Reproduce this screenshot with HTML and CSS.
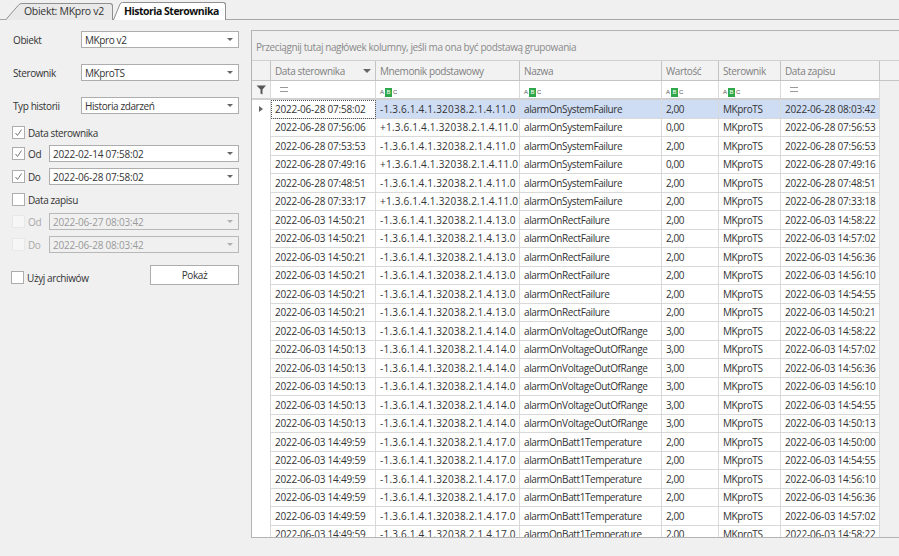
FILE: index.html
```html
<!DOCTYPE html>
<html lang="pl">
<head>
    <meta charset="UTF-8">
    <title>Historia Sterownika</title>
    <link rel="stylesheet" href="styles.css">
</head>
<body>
    <div class="tabs">
        <div class="tab">
            <svg class="tab-edge" width="19" height="17" viewBox="0 0 19 17"><path d="M0.5 17 L14 1.5 Q15 0.5 17 0.5 H19 V17 Z" fill="#e9e9e9"/><path d="M0.5 17 L14 1.5 Q15 0.5 17 0.5 H19" fill="none" stroke="#8f8f8f"/></svg>
            <span class="tab-label">Obiekt: MKpro v2</span>
        </div>
        <div class="tab tab-active">
            <svg class="tab-edge" width="11" height="18" viewBox="0 0 11 18"><path d="M0.5 18 L7 2 Q8 0.5 9.5 0.5 H11 V18 Z" fill="#fff"/><path d="M0.5 18 L7 2 Q8 0.5 9.5 0.5 H11" fill="none" stroke="#8f8f8f"/></svg>
            <span class="tab-label">Historia Sterownika</span>
        </div>
    </div>

    <div class="main">
        <div class="filters">
            <div class="field">
                <label class="field-label">Obiekt</label>
                <div class="combo"><span>MKpro v2</span><i class="arrow"></i></div>
            </div>
            <div class="field">
                <label class="field-label">Sterownik</label>
                <div class="combo"><span>MKproTS</span><i class="arrow"></i></div>
            </div>
            <div class="field field-last">
                <label class="field-label">Typ historii</label>
                <div class="combo"><span>Historia zdarzeń</span><i class="arrow"></i></div>
            </div>

            <div class="check-row check-head">
                <span class="check"><svg width="11" height="11" viewBox="0 0 11 11"><path d="M2.5 6 L4.5 8.5 L8.5 2.5" fill="none" stroke="#777"/></svg></span>
                <span>Data sterownika</span>
            </div>
            <div class="date-row">
                <span class="check"><svg width="11" height="11" viewBox="0 0 11 11"><path d="M2.5 6 L4.5 8.5 L8.5 2.5" fill="none" stroke="#777"/></svg></span>
                <span class="date-label">Od</span>
                <div class="combo"><span>2022-02-14 07:58:02</span><i class="arrow"></i></div>
            </div>
            <div class="date-row">
                <span class="check"><svg width="11" height="11" viewBox="0 0 11 11"><path d="M2.5 6 L4.5 8.5 L8.5 2.5" fill="none" stroke="#777"/></svg></span>
                <span class="date-label">Do</span>
                <div class="combo"><span>2022-06-28 07:58:02</span><i class="arrow"></i></div>
            </div>

            <div class="check-row check-head-2">
                <span class="check"></span>
                <span>Data zapisu</span>
            </div>
            <div class="date-row disabled">
                <span class="check"></span>
                <span class="date-label">Od</span>
                <div class="combo"><span>2022-06-27 08:03:42</span><i class="arrow"></i></div>
            </div>
            <div class="date-row disabled">
                <span class="check"></span>
                <span class="date-label">Do</span>
                <div class="combo"><span>2022-06-28 08:03:42</span><i class="arrow"></i></div>
            </div>

            <div class="actions">
                <div class="check-row archive">
                    <span class="check"></span>
                    <span>Użyj archiwów</span>
                </div>
                <button class="show-btn">Pokaż</button>
            </div>
        </div>

        <div class="grid">
            <div class="group-panel">Przeciągnij tutaj nagłówek kolumny, jeśli ma ona być podstawą grupowania</div>
            <div class="grid-body">
                <table>
                    <colgroup>
                        <col class="c-ind"><col class="c-date"><col class="c-oid"><col class="c-name"><col class="c-val"><col class="c-ster"><col class="c-saved"><col>
                    </colgroup>
                    <thead>
                        <tr class="head">
                            <th></th>
                            <th><div class="sort-cell">Data sterownika<i class="sort-arrow"></i></div></th>
                            <th>Mnemonik podstawowy</th>
                            <th>Nazwa</th>
                            <th>Wartość</th>
                            <th>Sterownik</th>
                            <th>Data zapisu</th>
                            <th class="rest"></th>
                        </tr>
                        <tr class="filter">
                            <td class="ind"><svg width="11" height="10" viewBox="0 0 11 10"><path d="M0.5 0.5 H10 L6.5 4.5 V9.5 L4.5 8.5 V4.5 Z" fill="#555"/></svg></td>
                            <td><span class="eq"></span></td>
                            <td><span class="abc"><b>A</b><u>B</u><b>C</b></span></td>
                            <td><span class="abc"><b>A</b><u>B</u><b>C</b></span></td>
                            <td><span class="abc"><b>A</b><u>B</u><b>C</b></span></td>
                            <td><span class="abc"><b>A</b><u>B</u><b>C</b></span></td>
                            <td><span class="eq"></span></td>
                            <td class="rest"></td>
                        </tr>
                    </thead>
                    <tbody>
                        <tr class="selected"><td class="ind"><i class="row-mark"></i></td><td class="focus">2022-06-28 07:58:02</td><td>-1.3.6.1.4.1.32038.2.1.4.11.0</td><td>alarmOnSystemFailure</td><td>2,00</td><td>MKproTS</td><td>2022-06-28 08:03:42</td><td class="rest"></td></tr>
                        <tr><td class="ind"></td><td>2022-06-28 07:56:06</td><td>+1.3.6.1.4.1.32038.2.1.4.11.0</td><td>alarmOnSystemFailure</td><td>0,00</td><td>MKproTS</td><td>2022-06-28 07:56:53</td><td class="rest"></td></tr>
                        <tr><td class="ind"></td><td>2022-06-28 07:53:53</td><td>-1.3.6.1.4.1.32038.2.1.4.11.0</td><td>alarmOnSystemFailure</td><td>2,00</td><td>MKproTS</td><td>2022-06-28 07:56:53</td><td class="rest"></td></tr>
                        <tr><td class="ind"></td><td>2022-06-28 07:49:16</td><td>+1.3.6.1.4.1.32038.2.1.4.11.0</td><td>alarmOnSystemFailure</td><td>0,00</td><td>MKproTS</td><td>2022-06-28 07:49:16</td><td class="rest"></td></tr>
                        <tr><td class="ind"></td><td>2022-06-28 07:48:51</td><td>-1.3.6.1.4.1.32038.2.1.4.11.0</td><td>alarmOnSystemFailure</td><td>2,00</td><td>MKproTS</td><td>2022-06-28 07:48:51</td><td class="rest"></td></tr>
                        <tr><td class="ind"></td><td>2022-06-28 07:33:17</td><td>+1.3.6.1.4.1.32038.2.1.4.11.0</td><td>alarmOnSystemFailure</td><td>2,00</td><td>MKproTS</td><td>2022-06-28 07:33:18</td><td class="rest"></td></tr>
                        <tr><td class="ind"></td><td>2022-06-03 14:50:21</td><td>-1.3.6.1.4.1.32038.2.1.4.13.0</td><td>alarmOnRectFailure</td><td>2,00</td><td>MKproTS</td><td>2022-06-03 14:58:22</td><td class="rest"></td></tr>
                        <tr><td class="ind"></td><td>2022-06-03 14:50:21</td><td>-1.3.6.1.4.1.32038.2.1.4.13.0</td><td>alarmOnRectFailure</td><td>2,00</td><td>MKproTS</td><td>2022-06-03 14:57:02</td><td class="rest"></td></tr>
                        <tr><td class="ind"></td><td>2022-06-03 14:50:21</td><td>-1.3.6.1.4.1.32038.2.1.4.13.0</td><td>alarmOnRectFailure</td><td>2,00</td><td>MKproTS</td><td>2022-06-03 14:56:36</td><td class="rest"></td></tr>
                        <tr><td class="ind"></td><td>2022-06-03 14:50:21</td><td>-1.3.6.1.4.1.32038.2.1.4.13.0</td><td>alarmOnRectFailure</td><td>2,00</td><td>MKproTS</td><td>2022-06-03 14:56:10</td><td class="rest"></td></tr>
                        <tr><td class="ind"></td><td>2022-06-03 14:50:21</td><td>-1.3.6.1.4.1.32038.2.1.4.13.0</td><td>alarmOnRectFailure</td><td>2,00</td><td>MKproTS</td><td>2022-06-03 14:54:55</td><td class="rest"></td></tr>
                        <tr><td class="ind"></td><td>2022-06-03 14:50:21</td><td>-1.3.6.1.4.1.32038.2.1.4.13.0</td><td>alarmOnRectFailure</td><td>2,00</td><td>MKproTS</td><td>2022-06-03 14:50:21</td><td class="rest"></td></tr>
                        <tr><td class="ind"></td><td>2022-06-03 14:50:13</td><td>-1.3.6.1.4.1.32038.2.1.4.14.0</td><td>alarmOnVoltageOutOfRange</td><td>3,00</td><td>MKproTS</td><td>2022-06-03 14:58:22</td><td class="rest"></td></tr>
                        <tr><td class="ind"></td><td>2022-06-03 14:50:13</td><td>-1.3.6.1.4.1.32038.2.1.4.14.0</td><td>alarmOnVoltageOutOfRange</td><td>3,00</td><td>MKproTS</td><td>2022-06-03 14:57:02</td><td class="rest"></td></tr>
                        <tr><td class="ind"></td><td>2022-06-03 14:50:13</td><td>-1.3.6.1.4.1.32038.2.1.4.14.0</td><td>alarmOnVoltageOutOfRange</td><td>3,00</td><td>MKproTS</td><td>2022-06-03 14:56:36</td><td class="rest"></td></tr>
                        <tr><td class="ind"></td><td>2022-06-03 14:50:13</td><td>-1.3.6.1.4.1.32038.2.1.4.14.0</td><td>alarmOnVoltageOutOfRange</td><td>3,00</td><td>MKproTS</td><td>2022-06-03 14:56:10</td><td class="rest"></td></tr>
                        <tr><td class="ind"></td><td>2022-06-03 14:50:13</td><td>-1.3.6.1.4.1.32038.2.1.4.14.0</td><td>alarmOnVoltageOutOfRange</td><td>3,00</td><td>MKproTS</td><td>2022-06-03 14:54:55</td><td class="rest"></td></tr>
                        <tr><td class="ind"></td><td>2022-06-03 14:50:13</td><td>-1.3.6.1.4.1.32038.2.1.4.14.0</td><td>alarmOnVoltageOutOfRange</td><td>3,00</td><td>MKproTS</td><td>2022-06-03 14:50:13</td><td class="rest"></td></tr>
                        <tr><td class="ind"></td><td>2022-06-03 14:49:59</td><td>-1.3.6.1.4.1.32038.2.1.4.17.0</td><td>alarmOnBatt1Temperature</td><td>2,00</td><td>MKproTS</td><td>2022-06-03 14:50:00</td><td class="rest"></td></tr>
                        <tr><td class="ind"></td><td>2022-06-03 14:49:59</td><td>-1.3.6.1.4.1.32038.2.1.4.17.0</td><td>alarmOnBatt1Temperature</td><td>2,00</td><td>MKproTS</td><td>2022-06-03 14:54:55</td><td class="rest"></td></tr>
                        <tr><td class="ind"></td><td>2022-06-03 14:49:59</td><td>-1.3.6.1.4.1.32038.2.1.4.17.0</td><td>alarmOnBatt1Temperature</td><td>2,00</td><td>MKproTS</td><td>2022-06-03 14:56:10</td><td class="rest"></td></tr>
                        <tr><td class="ind"></td><td>2022-06-03 14:49:59</td><td>-1.3.6.1.4.1.32038.2.1.4.17.0</td><td>alarmOnBatt1Temperature</td><td>2,00</td><td>MKproTS</td><td>2022-06-03 14:56:36</td><td class="rest"></td></tr>
                        <tr><td class="ind"></td><td>2022-06-03 14:49:59</td><td>-1.3.6.1.4.1.32038.2.1.4.17.0</td><td>alarmOnBatt1Temperature</td><td>2,00</td><td>MKproTS</td><td>2022-06-03 14:57:02</td><td class="rest"></td></tr>
                        <tr><td class="ind"></td><td>2022-06-03 14:49:59</td><td>-1.3.6.1.4.1.32038.2.1.4.17.0</td><td>alarmOnBatt1Temperature</td><td>2,00</td><td>MKproTS</td><td>2022-06-03 14:58:22</td><td class="rest"></td></tr>
                    </tbody>
                </table>
            </div>
        </div>
    </div>
</body>
</html>
```

FILE: styles.css
```css
/* Global Styles */
html, body {
    margin: 0;
    padding: 0;
}

body {
    width: 899px;
    height: 556px;
    overflow: hidden;
    background: #f0f0f0;
    color: #333;
    font-family: "Open Sans", "Noto Sans", sans-serif;
    font-size: 10px;
    letter-spacing: -0.4px;
}

/* Tabs */
.tabs {
    display: flex;
    align-items: flex-end;
    height: 19px;
    padding-left: 5px;
    border-bottom: 1px solid #a6a6a6;
}

.tab {
    display: flex;
    height: 17px;
    margin-bottom: -1px;
}

.tab-edge {
    display: block;
    flex: none;
}

.tab-label {
    width: 89px;
    box-sizing: border-box;
    background: #e9e9e9;
    border: 1px solid #8f8f8f;
    border-left: none;
    border-bottom: none;
    border-radius: 0 3px 0 0;
    font-size: 10.5px;
    letter-spacing: -0.3px;
    line-height: 15px;
    white-space: nowrap;
}

.tab-active {
    height: 18px;
    position: relative;
}

.tab-active .tab-label {
    width: 102px;
    background: #fff;
    color: #111;
    font-weight: bold;
    letter-spacing: -0.5px;
    line-height: 16px;
}

/* Left panel */
.main {
    display: flex;
    height: 536px;
}

.filters {
    flex: none;
    width: 251px;
    box-sizing: border-box;
    padding: 11px 12px 0;
}

.field {
    display: flex;
    align-items: center;
    justify-content: space-between;
    margin-bottom: 16px;
}

.field-last {
    margin-bottom: 12px;
}

.field-label {
    padding-left: 1px;
}

.combo {
    display: flex;
    align-items: center;
    justify-content: space-between;
    width: 158px;
    height: 17px;
    box-sizing: border-box;
    padding: 0 5px 0 3px;
    background: #fff;
    border: 1px solid #adadad;
    color: #333;
}

.arrow {
    width: 0;
    height: 0;
    border-left: 3px solid transparent;
    border-right: 3px solid transparent;
    border-top: 3px solid #666;
}

.check {
    display: inline-block;
    flex: none;
    width: 13px;
    height: 13px;
    box-sizing: border-box;
    background: #fff;
    border: 1px solid #adadad;
}

.check svg {
    display: block;
}

.check-row {
    display: flex;
    align-items: center;
    gap: 3px;
    height: 13px;
}

.check-head {
    margin-bottom: 6px;
}

.check-head-2 {
    margin: 8px 0 7px;
}

.date-row {
    display: flex;
    align-items: center;
    margin-bottom: 6px;
}

.date-row .combo {
    width: 190px;
    letter-spacing: -0.2px;
}

.date-label {
    width: 24px;
    padding-left: 3px;
    box-sizing: border-box;
}

.disabled {
    color: #aaa;
}

.disabled .check {
    background: #f6f6f6;
    border-color: #e8e8e8;
}

.disabled .combo {
    background: #f0f0f0;
    color: #9a9a9a;
    border-color: #b8b8b8;
}

.disabled .arrow {
    border-top-color: #b0b0b0;
}

.actions {
    display: flex;
    align-items: center;
    justify-content: space-between;
    margin: 12px 0 0 -1px;
}

.archive {
    margin-top: 5px;
}

.show-btn {
    width: 89px;
    height: 20px;
    padding: 0;
    background: #fff;
    border: 1px solid #adadad;
    color: #333;
    font: inherit;
    letter-spacing: inherit;
}

/* Grid */
.grid {
    flex: none;
    width: 648px;
    height: 508px;
    margin-top: 10px;
    box-sizing: border-box;
    border: 1px solid #b4b4b4;
    border-right: none;
    display: flex;
    flex-direction: column;
}

.group-panel {
    flex: none;
    height: 30px;
    box-sizing: border-box;
    padding: 9px 0 0 4px;
    border-bottom: 1px solid #d0d0d0;
    color: #8a8a8a;
}

.grid-body {
    flex: 1;
    overflow: hidden;
}

table {
    table-layout: fixed;
    width: 647px;
    border-collapse: separate;
    border-spacing: 0;
}

.c-ind { width: 19px; }
.c-date { width: 105px; }
.c-oid { width: 144px; }
.c-name { width: 142px; }
.c-val { width: 57px; }
.c-ster { width: 62px; }
.c-saved { width: 99px; }

th, td {
    height: 18.5px;
    box-sizing: border-box;
    padding: 0 0 0 4px;
    border-right: 1px solid #d9d9d9;
    border-bottom: 1px solid #d9d9d9;
    background: #fff;
    text-align: left;
    font-weight: normal;
    white-space: nowrap;
    overflow: hidden;
}

tbody td:nth-child(2),
tbody td:nth-child(7) {
    letter-spacing: -0.2px;
}

tbody td:nth-child(3) {
    letter-spacing: 0.22px;
}

.head th {
    height: 20px;
    background: #f2f2f2;
    border-right: 1px solid #c4c4c4;
    border-bottom: 1px solid #c4c4c4;
    color: #808080;
}

.filter td {
    height: 19px;
    border-bottom: 2px solid #d0d0d0;
}

.sort-cell {
    display: flex;
    align-items: center;
    justify-content: space-between;
    padding-right: 4px;
}

.sort-arrow {
    width: 0;
    height: 0;
    border-left: 4px solid transparent;
    border-right: 4px solid transparent;
    border-top: 4px solid #666;
}

.rest,
.filter .rest {
    background: #f0f0f0;
    border-right: none;
    border-bottom: none;
}

.head .rest {
    background: #f2f2f2;
    border-right: none;
    border-bottom: 1px solid #c4c4c4;
}

.ind {
    padding: 0;
    background: #f4f4f4;
    text-align: center;
}

tbody .ind {
    background: #fff;
    border-bottom: none;
}

.ind svg {
    display: block;
    margin: 0 auto;
}

.row-mark {
    display: block;
    width: 0;
    height: 0;
    margin: 0 auto;
    border-top: 3px solid transparent;
    border-bottom: 3px solid transparent;
    border-left: 4px solid #666;
}

.selected td {
    background: #cfddf4;
}

.selected .ind {
    background: #fff;
}

.selected .rest {
    background: #f0f0f0;
}

.selected .focus {
    background: #fff;
    outline: 1px dotted #555;
    outline-offset: -1px;
}

.eq {
    display: block;
    width: 8px;
    height: 3px;
    margin-left: 5px;
    border-top: 1px solid #999;
    border-bottom: 1px solid #999;
}

.abc {
    display: inline-flex;
    align-items: center;
    height: 9px;
    font-family: "Liberation Sans", sans-serif;
    font-size: 6px;
    letter-spacing: 0;
    line-height: 9px;
    color: #555;
}

.abc b {
    font-weight: normal;
}

.abc u {
    margin: 0 1px;
    padding: 0 1.5px;
    background: #2ea84a;
    color: #fff;
    text-decoration: none;
}
```
